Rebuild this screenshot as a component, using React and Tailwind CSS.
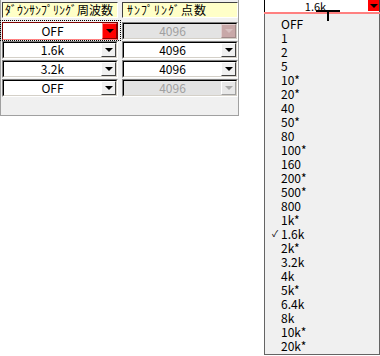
import React from "react";

const FONT = { fontFamily: '"Noto Sans CJK JP", "DejaVu Sans", sans-serif' };

const listItems = [
  "OFF", "1", "2", "5", "10*", "20*", "40", "50*", "80", "100*", "160", "200*",
  "500*", "800", "1k*", "1.6k", "2k*", "3.2k", "4k", "5k*", "6.4k", "8k", "10k*", "20k*",
];

const rows = [
  { freq: "OFF", points: "4096", pointsDisabled: true, focused: true },
  { freq: "1.6k", points: "4096" },
  { freq: "3.2k", points: "4096" },
  { freq: "OFF", points: "4096", pointsDisabled: true },
];

const Arrow = ({ color = "border-t-black" }) => (
  <div className={`w-0 h-0 border-l-[4px] border-r-[4px] border-t-[4px] border-l-transparent border-r-transparent ${color}`} />
);

const Combo = ({ value, disabled, focused, tinted }) => {
  let outer = "border-t border-l border-t-[#808080] border-l-[#808080] border-b border-r border-b-white border-r-white";
  if (focused) outer = "border border-[#800000] border-b-[#ff8080]";

  let field = disabled ? "bg-[#e3e3e3] text-[#a0a0a0]" : "bg-white text-black";

  let btn = "bg-[#f0f0f0] border-t border-l border-t-white border-l-white border-b border-r border-b-[#404040] border-r-[#404040]";
  let arrow = "border-t-black";
  if (focused) {
    btn = "bg-[#ff0000] border-t border-l border-t-[#ff8080] border-l-[#ff8080] border-b border-r border-b-[#800000] border-r-[#800000]";
  } else if (disabled && tinted) {
    btn = "bg-[#c8a8a8] border-t border-l border-t-[#e0d0d0] border-l-[#e0d0d0] border-b border-r border-b-[#a08888] border-r-[#a08888]";
    arrow = "border-t-[#d8c0c0]";
  } else if (disabled) {
    btn = "bg-[#e8e8e8] border-t border-l border-t-white border-l-white border-b border-r border-b-[#a0a0a0] border-r-[#a0a0a0]";
    arrow = "border-t-[#a8a8a8]";
  }

  return (
    <div className="relative h-[18px]">
      <div className={`h-full ${outer}`}>
        <div className={`h-full flex ${focused ? "" : "border-t border-l border-t-black border-l-black border-b border-r border-b-[#d4d0c8] border-r-[#d4d0c8]"} ${field}`}>
          <div className="flex-1 flex items-center justify-center text-[12px] leading-none">{value}</div>
          <div className={`w-[15px] flex items-center justify-center ${btn}`}>
            <Arrow color={arrow} />
          </div>
        </div>
      </div>
      {focused && (
        <div className="absolute -left-[2px] -top-[2px] -right-[3px] -bottom-[1px] border border-dotted border-black pointer-events-none" />
      )}
    </div>
  );
};

const Header = ({ children, pad = "pl-[2px]" }) => (
  <div className={`h-[16px] bg-[#ffffc8] border-t border-l border-t-[#404040] border-l-[#404040] border-b border-r border-b-white border-r-white flex items-center ${pad} text-[12px] leading-none whitespace-nowrap`}>
    {children}
  </div>
);

export default function App() {
  return (
    <div className="w-[380px] h-[356px] bg-white flex items-start" style={FONT}>
      <div className="w-[239px] h-[116px] bg-[#f0f0f0] border-l border-r border-b border-[#a0a0a0] pt-[2px] pl-[1px]">
        <div className="grid grid-cols-[116px_116px] gap-x-[4px]">
          <Header>ﾀﾞｳﾝｻﾝﾌﾟﾘﾝｸﾞ周波数</Header>
          <Header pad="pl-[4px] tracking-[1px]">ｻﾝﾌﾟﾘﾝｸﾞ点数</Header>
        </div>
        <div className="grid grid-cols-[116px_116px] gap-x-[4px] gap-y-[1px] mt-[4px]">
          {rows.map((r, i) => (
            <React.Fragment key={i}>
              <Combo value={r.freq} focused={r.focused} />
              <Combo value={r.points} disabled={r.pointsDisabled} tinted={i === 0} />
            </React.Fragment>
          ))}
        </div>
      </div>

      <div className="ml-[25px] w-[116px] flex flex-col">
        <div className="relative h-[12px] bg-white border-l border-r border-l-black border-r-[#404040] flex">
          <div className="flex-1 flex items-center justify-center text-[11px] leading-[11px]">
            <span className="mr-[2px]">1.6k</span>
          </div>
          <div className="w-[11px] h-[11px] bg-[#ff0000] flex items-center justify-center">
            <Arrow />
          </div>
          <div className="absolute left-[51px] top-[10px] w-[24px] h-[2px] bg-black" />
        </div>
        <div className="h-[2px] bg-[#ff8080]" />
        <div className="relative h-[341px] bg-[#f0f0f0] border-l border-r border-b border-[#646464] pt-[3px] text-[12px]">
          <div className="absolute left-[62px] -top-[4px] w-[2px] h-[11px] bg-black" />
          {listItems.map((item) => (
            <div key={item} className="h-[14px] flex items-center leading-[14px]">
              <span className="w-[16px] pl-[7px] text-[9px]">{item === "1.6k" ? "✓" : ""}</span>
              <span>{item}</span>
            </div>
          ))}
        </div>
      </div>
    </div>
  );
}
